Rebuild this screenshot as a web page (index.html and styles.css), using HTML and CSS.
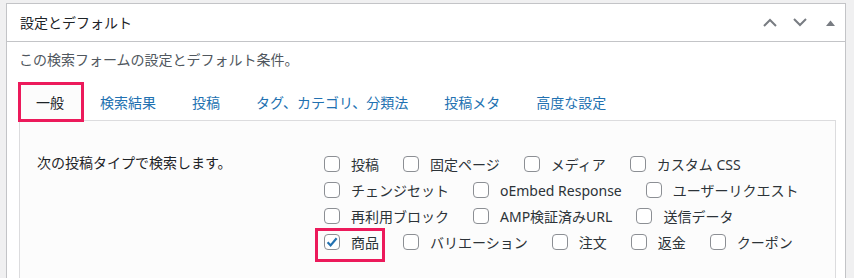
FILE: index.html
```html
<!DOCTYPE html>
<html lang="ja">
<head>
<meta charset="utf-8">
<title>設定とデフォルト</title>
<link rel="stylesheet" href="styles.css">
</head>
<body>
<div class="postbox">
  <div class="postbox-header">
    <h2 class="hndle">設定とデフォルト</h2>
    <div class="handle-actions">
      <button class="handle-btn" type="button" aria-label="上へ移動">
        <svg width="14" height="9" viewBox="0 0 14 9"><path d="M1 8 L7 2 L13 8" fill="none" stroke="#787c82" stroke-width="2"/></svg>
      </button>
      <button class="handle-btn" type="button" aria-label="下へ移動">
        <svg width="14" height="9" viewBox="0 0 14 9"><path d="M1 1 L7 7 L13 1" fill="none" stroke="#787c82" stroke-width="2"/></svg>
      </button>
      <button class="handle-btn" type="button" aria-label="パネルを切り替え">
        <svg width="9" height="6" viewBox="0 0 9 6"><polygon points="0,6 4.5,0.5 9,6" fill="#787c82"/></svg>
      </button>
    </div>
  </div>
  <div class="inside">
    <p class="desc">この検索フォームの設定とデフォルト条件。</p>
    <ul class="tabs">
      <li class="tab active">一般</li>
      <li class="tab">検索結果</li>
      <li class="tab">投稿</li>
      <li class="tab">タグ、カテゴリ、分類法</li>
      <li class="tab">投稿メタ</li>
      <li class="tab">高度な設定</li>
    </ul>
    <div class="tab-panel">
      <div class="field-row">
        <div class="field-label">次の投稿タイプで検索します。</div>
        <div class="options">
          <div class="opt-row">
            <label class="opt"><span class="cb"></span><span>投稿</span></label>
            <label class="opt"><span class="cb"></span><span>固定ページ</span></label>
            <label class="opt"><span class="cb"></span><span>メディア</span></label>
            <label class="opt"><span class="cb"></span><span>カスタム CSS</span></label>
          </div>
          <div class="opt-row">
            <label class="opt"><span class="cb"></span><span>チェンジセット</span></label>
            <label class="opt"><span class="cb"></span><span>oEmbed Response</span></label>
            <label class="opt"><span class="cb"></span><span>ユーザーリクエスト</span></label>
          </div>
          <div class="opt-row">
            <label class="opt"><span class="cb"></span><span>再利用ブロック</span></label>
            <label class="opt"><span class="cb"></span><span>AMP検証済みURL</span></label>
            <label class="opt"><span class="cb"></span><span>送信データ</span></label>
          </div>
          <div class="opt-row">
            <label class="opt highlight"><span class="cb checked"><svg width="14" height="14" viewBox="0 0 14 14"><path d="M2.6 7.2 L5.6 10.4 L11.6 3.2" fill="none" stroke="#2271b1" stroke-width="2.2"/></svg></span><span>商品</span></label>
            <label class="opt"><span class="cb"></span><span>バリエーション</span></label>
            <label class="opt"><span class="cb"></span><span>注文</span></label>
            <label class="opt"><span class="cb"></span><span>返金</span></label>
            <label class="opt"><span class="cb"></span><span>クーポン</span></label>
          </div>
        </div>
      </div>
    </div>
  </div>
</div>
</body>
</html>
```

FILE: styles.css
```css
*, *::before, *::after {
  box-sizing: border-box;
}

html, body {
  height: 100%;
}

body {
  margin: 0;
  padding: 3px 0 0 6px;
  background: #f0f0f1;
  font-family: "Noto Sans", "Noto Sans CJK JP", sans-serif;
  font-size: 14px;
  color: #1d2327;
  overflow: hidden;
}

.postbox {
  width: 840px;
  border: 1px solid #c3c4c7;
  background: #fff;
}

.postbox-header {
  display: flex;
  align-items: center;
  justify-content: space-between;
  height: 38px;
  border-bottom: 1px solid #c3c4c7;
}

.hndle {
  margin: 0;
  padding-left: 13px;
  font-size: 14px;
  font-weight: 400;
  line-height: 20px;
  color: #1d2327;
}

.handle-actions {
  display: flex;
  align-items: center;
  height: 100%;
}

.handle-btn {
  display: flex;
  align-items: center;
  justify-content: center;
  width: 30px;
  height: 36px;
  padding: 0;
  border: 0;
  background: transparent;
}

.inside {
  padding: 8px 9px 0 12px;
}

.desc {
  margin: 0;
  line-height: 20px;
  color: #50575e;
}

.tabs {
  display: flex;
  margin: 15px 0 -1px -1px;
  padding: 0;
  list-style: none;
  position: relative;
  z-index: 1;
}

.tab {
  padding: 0 18px;
  line-height: 36px;
  color: #2271b1;
  white-space: nowrap;
}

.tab.active {
  position: relative;
  color: #1d2327;
  background: #fcfcfc;
}

.tab.active::after {
  content: "";
  position: absolute;
  top: -3px;
  left: 0;
  width: 66px;
  height: 40px;
  border: 3px solid #ec1a5b;
}

.tab-panel {
  height: 200px;
  border: 1px solid #dcdcde;
  background: #fcfcfc;
  padding: 30px 0 0 17px;
}

.field-row {
  display: flex;
}

.field-label {
  width: 287px;
  flex: none;
  line-height: 24px;
  color: #1d2327;
}

.options {
  display: flex;
  flex-direction: column;
}

.opt-row {
  display: flex;
  column-gap: 24px;
}

.opt {
  display: flex;
  align-items: center;
  gap: 11px;
  height: 26px;
  color: #2c3338;
  white-space: nowrap;
}

.cb {
  display: flex;
  align-items: center;
  justify-content: center;
  width: 16px;
  height: 16px;
  flex: none;
  border: 1px solid #8c8f94;
  border-radius: 4px;
  background: #fff;
}

.opt.highlight {
  position: relative;
}

.opt.highlight::after {
  content: "";
  position: absolute;
  top: -1px;
  left: -9px;
  width: 70px;
  height: 34px;
  border: 3px solid #ec1a5b;
}
```
